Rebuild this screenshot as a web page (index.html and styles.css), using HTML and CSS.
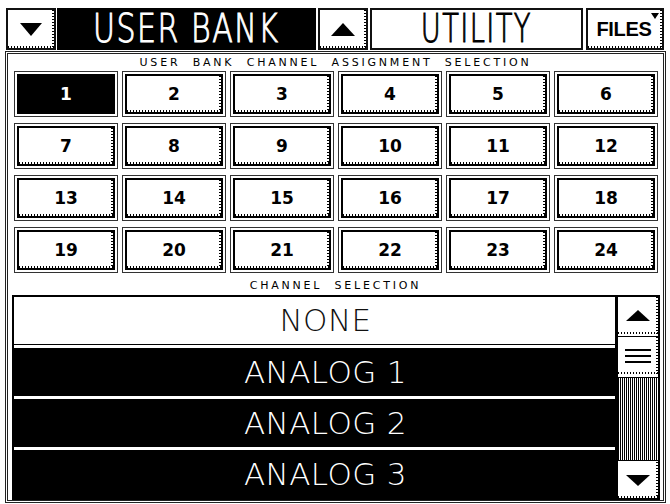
FILE: index.html
```html
<!DOCTYPE html>
<html>
<head>
<meta charset="utf-8">
<link rel="stylesheet" href="styles.css">
</head>
<body>
<div class="screen">
  <div class="topbar">
    <div class="tb-btn bevel">
      <svg width="22" height="13" viewBox="0 0 22 13"><polygon points="0,0 22,0 11,13" fill="#000"/></svg>
    </div>
    <div class="title-black"><span class="cond">USER BANK</span></div>
    <div class="tb-btn up bevel">
      <svg width="24" height="13" viewBox="0 0 24 13"><polygon points="0,13 24,13 12,0" fill="#000"/></svg>
    </div>
    <div class="utility"><span class="cond narrow">UTILITY</span></div>
    <div class="files bevel">
      <span class="files-text">FILES</span>
      <svg class="files-tri" width="8" height="6" viewBox="0 0 8 6"><polygon points="0,0 8,0 4,6" fill="#000"/></svg>
    </div>
  </div>

  <div class="panel">
    <div class="caption">USER BANK CHANNEL ASSIGNMENT SELECTION</div>
    <div class="grid">
      <div class="key sel"><div class="face">1</div></div>
      <div class="key"><div class="face bevel">2</div></div>
      <div class="key"><div class="face bevel">3</div></div>
      <div class="key"><div class="face bevel">4</div></div>
      <div class="key"><div class="face bevel">5</div></div>
      <div class="key"><div class="face bevel">6</div></div>
      <div class="key"><div class="face bevel">7</div></div>
      <div class="key"><div class="face bevel">8</div></div>
      <div class="key"><div class="face bevel">9</div></div>
      <div class="key"><div class="face bevel">10</div></div>
      <div class="key"><div class="face bevel">11</div></div>
      <div class="key"><div class="face bevel">12</div></div>
      <div class="key"><div class="face bevel">13</div></div>
      <div class="key"><div class="face bevel">14</div></div>
      <div class="key"><div class="face bevel">15</div></div>
      <div class="key"><div class="face bevel">16</div></div>
      <div class="key"><div class="face bevel">17</div></div>
      <div class="key"><div class="face bevel">18</div></div>
      <div class="key"><div class="face bevel">19</div></div>
      <div class="key"><div class="face bevel">20</div></div>
      <div class="key"><div class="face bevel">21</div></div>
      <div class="key"><div class="face bevel">22</div></div>
      <div class="key"><div class="face bevel">23</div></div>
      <div class="key"><div class="face bevel">24</div></div>
    </div>
    <div class="caption caption2">CHANNEL SELECTION</div>
    <div class="list">
      <div class="items">
        <div class="item none">NONE</div>
        <div class="item">ANALOG 1</div>
        <div class="item">ANALOG 2</div>
        <div class="item">ANALOG 3</div>
      </div>
      <div class="scrollbar">
        <div class="sb-btn bevel">
          <svg width="24" height="11" viewBox="0 0 24 11"><polygon points="0,11 24,11 12,0" fill="#000"/></svg>
        </div>
        <div class="sb-thumb bevel">
          <svg width="26" height="16" viewBox="0 0 26 16"><rect x="0" y="1" width="26" height="2" fill="#000"/><rect x="0" y="7" width="26" height="2" fill="#000"/><rect x="0" y="13" width="26" height="2" fill="#000"/></svg>
        </div>
        <div class="sb-track"></div>
        <div class="sb-btn down bevel">
          <svg width="24" height="11" viewBox="0 0 24 11"><polygon points="0,0 24,0 12,11" fill="#000"/></svg>
        </div>
      </div>
    </div>
  </div>
</div>
</body>
</html>
```
FILE: styles.css
```css
* { box-sizing: border-box; }
html, body { margin: 0; padding: 0; background: #fff; }
body { width: 670px; height: 504px; overflow: hidden; font-family: "Liberation Sans", Arial, sans-serif; color: #000; }
.screen { width: 670px; height: 504px; }

/* bevel: dotted highlight along right and bottom inner edges */
.bevel { position: relative; }
.bevel::before {
  content: ""; position: absolute; top: 0; right: 0; bottom: 0; width: 2px;
  background: repeating-linear-gradient(180deg, #000 0 1px, transparent 1px 3px);
}
.bevel::after {
  content: ""; position: absolute; left: 0; right: 0; bottom: 0; height: 2px;
  background: repeating-linear-gradient(90deg, #000 0 1px, transparent 1px 3px);
}

.topbar { display: flex; margin: 8px 0 0 6px; height: 42px; }
.tb-btn {
  width: 50px; height: 42px; border: 2px solid #111; background: #fff;
  display: flex; align-items: center; justify-content: center;
}
.tb-btn svg { display: block; }
.tb-btn.up { margin-left: 2px; }
.title-black {
  width: 259px; margin-left: 1px; background: #000; color: #fff;
  display: flex; align-items: center; justify-content: center;
}
.cond {
  display: inline-block; font-family: "DejaVu Sans", sans-serif; font-weight: 200;
  font-size: 39px; line-height: 40px; letter-spacing: 2px;
  -webkit-text-stroke: 1px currentColor;
  transform: scaleX(0.77); white-space: nowrap; margin: 0 -40px;
}
.cond.narrow { transform: scaleX(0.7); }
.utility {
  width: 213px; margin-left: 2px; border: 2px solid #111; background: #fff;
  display: flex; align-items: center; justify-content: center;
}
.files {
  width: 78px; margin-left: 3px; border: 2px solid #111; background: #fff;
  display: flex; align-items: center; justify-content: center;
}
.files-text { font-weight: bold; font-size: 20px; letter-spacing: -0.3px; margin-right: 2px; }
.files-tri { position: absolute; top: 3px; right: 3px; }

.panel {
  margin: 1px 4px 0 5px; height: 452px; border: 3px double #222;
}
.caption {
  height: 17px; line-height: 18px; text-align: center;
  font-family: "DejaVu Sans", sans-serif; font-size: 11px; letter-spacing: 2.8px; word-spacing: 6px;
  color: #000; white-space: nowrap;
}
.caption2 { height: 22px; line-height: 26px; }

.grid {
  margin-left: 6px; display: grid;
  grid-template-columns: repeat(6, 104px); grid-auto-rows: 46px;
  column-gap: 4px; row-gap: 6px;
}
.key { border: 1px solid #333; padding: 2px; background: #fff; }
.face {
  height: 100%; border: 2px solid #000; background: #fff;
  display: flex; align-items: center; justify-content: center;
  font-family: "DejaVu Sans", sans-serif; font-weight: bold; font-size: 17px;
}
.key.sel .face { background: #000; color: #fff; }

.list {
  margin-left: 4px; width: 648px; height: 205px; border: 2px solid #000;
  display: flex;
}
.items {
  width: 601px; display: flex; flex-direction: column; gap: 3px; background: #fff;
}
.item {
  height: 48px; flex: none; background: #000; color: #fff;
  font-family: "DejaVu Sans", sans-serif; font-weight: 200;
  font-size: 31px; line-height: 48px; text-align: center; letter-spacing: 0.4px;
  padding-left: 22px;
}
.item.none { background: #fff; color: #111; border-bottom: 1px solid #000; line-height: 47px; }

.scrollbar {
  width: 43px; border-left: 3px solid #000; display: flex; flex-direction: column; background: #fff;
}
.sb-btn {
  height: 37px; flex: none; background: #fff; display: flex; align-items: center; justify-content: center;
}
.sb-btn svg, .sb-thumb svg { display: block; }
.sb-thumb {
  height: 38px; flex: none; margin-top: 2px; background: #fff; border-top: 1px solid #000;
  display: flex; align-items: center; justify-content: center;
}
.sb-track {
  flex: 1 1 auto; min-height: 60px; margin-top: 3px; border-top: 1px solid #000; border-bottom: 1px solid #000;
  background: #888 repeating-linear-gradient(90deg, #000 0 1px, #fff 1px 2px);
}
.sb-btn.down { height: 36px; margin-top: 1px; }
```
